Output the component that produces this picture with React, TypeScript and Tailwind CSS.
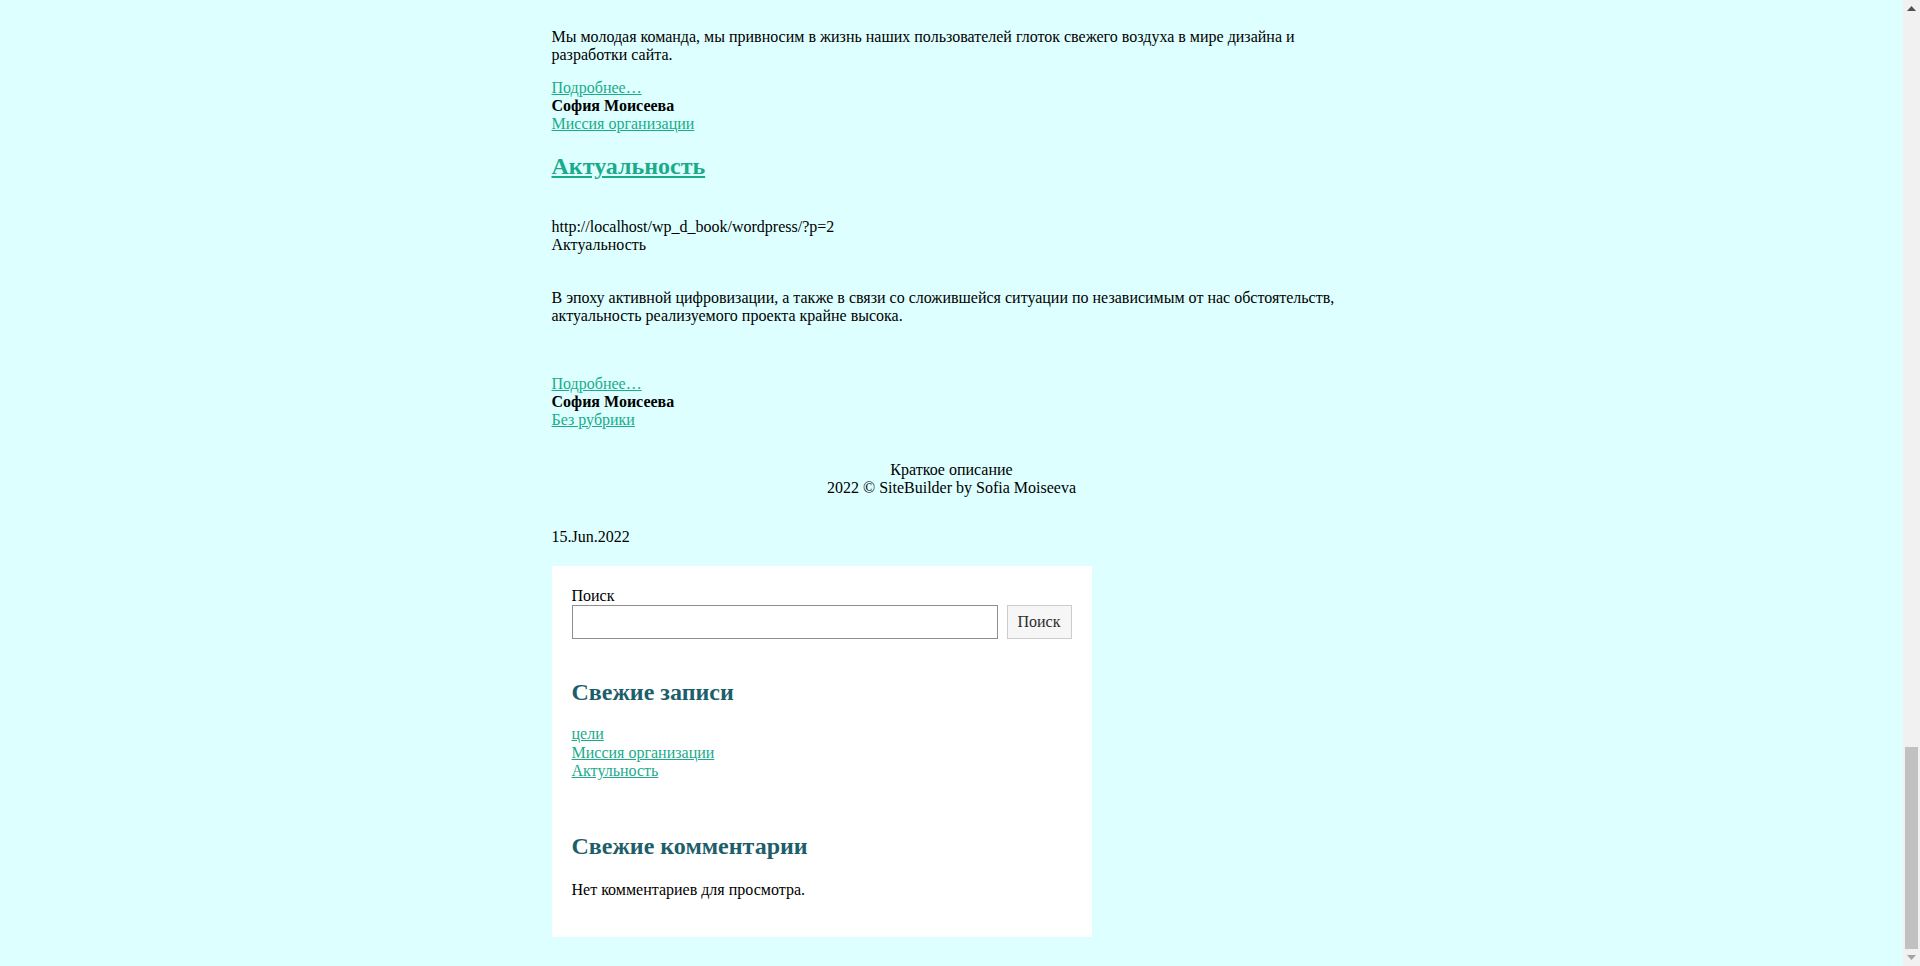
import React from "react";

const link = "text-[#1aab8a] underline";

export default function App() {
  return (
    <div className="flex h-[966px] w-full overflow-hidden bg-[#ddffff] font-['Liberation_Serif','Times_New_Roman',serif] text-[16px] leading-[18px] text-black">
      <div className="min-w-0 flex-1">
        <main className="mx-auto w-[800px] pt-[28px]">
          <p>
            Мы молодая команда, мы привносим в жизнь наших пользователей глоток свежего воздуха в мире дизайна и
            разработки сайта.
          </p>
          <div className="mt-[15px] flex flex-col items-start">
            <a className={link} href="#">Подробнее…</a>
            <b>София Моисеева</b>
            <a className={link} href="#">Миссия организации</a>
          </div>

          <h2 className="mt-[20px] text-[24px] font-bold leading-[27.6px]">
            <a className="text-[#1aab8a] underline" href="#">Актуальность</a>
          </h2>
          <div className="mt-[37px]">
            <div>http://localhost/wp_d_book/wordpress/?p=2</div>
            <div>Актуальность</div>
          </div>
          <p className="mt-[35px]">
            В эпоху активной цифровизации, а также в связи со сложившейся ситуации по независимым от нас обстоятельств,
            актуальность реализуемого проекта крайне высока.
          </p>
          <div className="mt-[50px] flex flex-col items-start">
            <a className={link} href="#">Подробнее…</a>
            <b>София Моисеева</b>
            <a className={link} href="#">Без рубрики</a>
          </div>
        </main>

        <footer className="mt-[32px] text-center">
          <div>Краткое описание</div>
          <div>2022 © SiteBuilder by Sofia Moiseeva</div>
        </footer>

        <div className="mx-auto w-[800px]">
          <div className="mt-[31px]">15.Jun.2022</div>
          <aside className="mt-[20px] w-[540px] bg-white px-[20px] pb-[38px] pt-[21px]">
            <label className="block">Поиск</label>
            <div className="flex items-center gap-[9px]">
              <input
                type="text"
                className="h-[34px] w-[426px] border border-[#8f8f8f] bg-white px-2 outline-none"
              />
              <button className="h-[34px] w-[54px] flex-1 border border-[#cccccc] bg-[#f6f6f6] text-[16px] text-[#2b2b2b]">
                Поиск
              </button>
            </div>

            <h2 className="mt-[40px] text-[24px] font-bold leading-[27.6px] text-[#1d5e6b]">Свежие записи</h2>
            <ul className="mt-[19px] flex flex-col items-start leading-[18.4px]">
              <li><a className={link} href="#">цели</a></li>
              <li><a className={link} href="#">Миссия организации</a></li>
              <li><a className={link} href="#">Актульность</a></li>
            </ul>

            <h2 className="mt-[53px] text-[24px] font-bold leading-[27.6px] text-[#1d5e6b]">Свежие комментарии</h2>
            <p className="mt-[20px]">Нет комментариев для просмотра.</p>
          </aside>
        </div>
      </div>

      <div className="flex h-full w-[17px] flex-col bg-[#f1f1f1]">
        <div className="flex h-[17px] items-center justify-center">
          <svg width="9" height="5" viewBox="0 0 9 5">
            <path d="M4.5 0 L9 5 L0 5 Z" fill="#505050" />
          </svg>
        </div>
        <div className="flex flex-1 flex-col justify-end">
          <div className="mx-[2px] h-[202px] bg-[#c1c1c1]" />
        </div>
        <div className="flex h-[17px] items-center justify-center">
          <svg width="9" height="5" viewBox="0 0 9 5">
            <path d="M0 0 L9 0 L4.5 5 Z" fill="#a3a3a3" />
          </svg>
        </div>
      </div>
    </div>
  );
}
